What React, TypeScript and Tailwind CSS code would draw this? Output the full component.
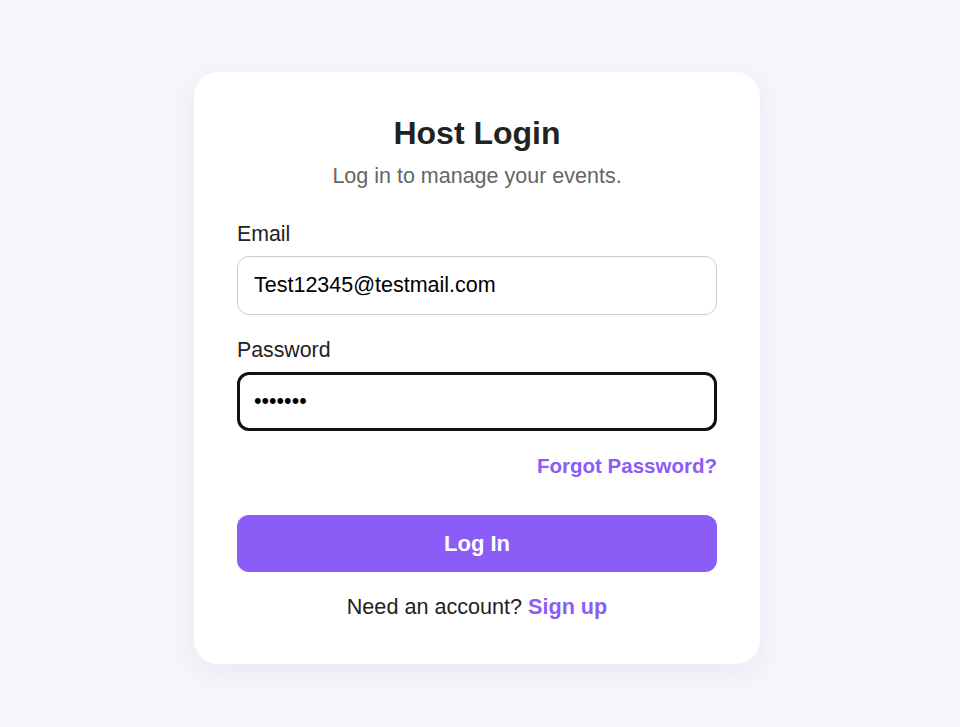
export default function App() {
  return (
    <div className="min-h-[727px] bg-[#f7f6fb] pt-[72px] pl-[194px] font-['Liberation_Sans',Arial,sans-serif]">
      <div className="w-[566px] rounded-[24px] bg-white px-[43px] pt-[43px] pb-[45px] shadow-[0_8px_32px_rgba(60,50,110,0.08)]">
        <h1 className="text-center text-[32px] leading-[36px] font-bold text-[#222]">Host Login</h1>
        <p className="mt-3 pt-px text-center text-[21.5px] leading-6 text-[#666]">Log in to manage your events.</p>

        <form className="mt-[34px] flex flex-col" onSubmit={(e) => e.preventDefault()}>
          <label className="text-[21.3px] leading-6 text-[#222]">Email</label>
          <input
            type="email"
            defaultValue="Test12345@testmail.com"
            className="mt-[10px] h-[59px] w-full rounded-[12px] border border-[#cccccc] px-4 text-[21.5px] text-black outline-none"
          />

          <label className="mt-[23px] text-[21.3px] leading-6 text-[#222]">Password</label>
          <input
            type="password"
            defaultValue="1234567"
            className="mt-[10px] h-[59px] w-full rounded-[12px] border-[3px] border-[#111] px-[14px] text-[21.5px] text-black outline-none"
          />

          <div className="mt-[23px] flex justify-end">
            <a href="#" className="text-[20.5px] leading-6 font-bold text-[#8b5cf6]">Forgot Password?</a>
          </div>

          <button
            type="submit"
            className="mt-[37px] h-[57px] w-full rounded-[12px] bg-[#8b5cf6] text-[22px] font-bold text-white"
          >
            Log In
          </button>

          <p className="mt-[23px] text-center text-[21.6px] leading-6 text-[#222]">
            Need an account? <a href="#" className="font-bold text-[#8b5cf6]">Sign up</a>
          </p>
        </form>
      </div>
    </div>
  );
}
